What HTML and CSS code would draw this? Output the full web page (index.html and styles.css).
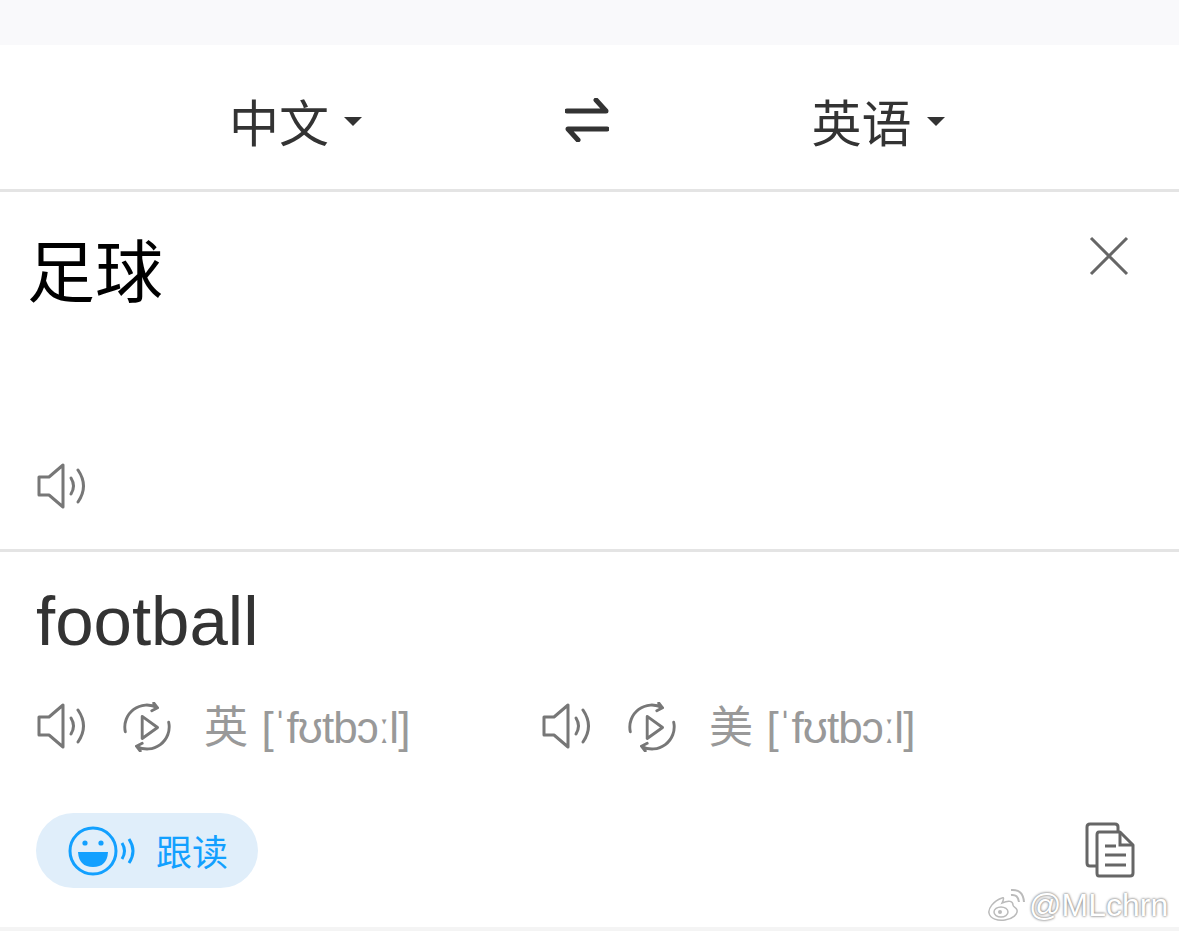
FILE: index.html
```html
<!DOCTYPE html>
<html>
<head>
  <title>翻译</title>
  <link rel="stylesheet" href="styles.css">
</head>

<body>

<div class="status-strip"></div>

<div class="lang-bar">
  <div class="lang lang-from">中文<span class="caret"></span></div>
  <svg class="swap" width="44" height="44" viewBox="0 0 44 44">
    <path d="M2 13H41L31 2" fill="none" stroke="#333" stroke-width="5" stroke-linejoin="round" stroke-linecap="round"/>
    <path d="M42 31H3L13 42" fill="none" stroke="#333" stroke-width="5" stroke-linejoin="round" stroke-linecap="round"/>
  </svg>
  <div class="lang lang-to">英语<span class="caret"></span></div>
</div>

<div class="source">
  <div class="source-top">
    <div class="source-text">足球</div>
    <svg class="close" width="40" height="40" viewBox="0 0 40 40">
      <path d="M2 2L38 38M38 2L2 38" stroke="#666" stroke-width="3" fill="none"/>
    </svg>
  </div>
  <svg class="speaker" width="50" height="46" viewBox="0 0 50 46">
    <path d="M2 14H12L26 2V44L12 32H2Z" fill="none" stroke="#777" stroke-width="3" stroke-linejoin="round"/>
    <path d="M34 15Q39 23 34 31" fill="none" stroke="#777" stroke-width="3" stroke-linecap="round"/>
    <path d="M41 7Q52 23 41 39" fill="none" stroke="#777" stroke-width="3" stroke-linecap="round"/>
  </svg>
</div>

<div class="result">
  <div class="result-text">football</div>

  <div class="phonetics">
    <div class="phonetic">
      <svg class="speaker" width="50" height="46" viewBox="0 0 50 46">
        <path d="M2 14H12L26 2V44L12 32H2Z" fill="none" stroke="#777" stroke-width="3" stroke-linejoin="round"/>
        <path d="M34 15Q39 23 34 31" fill="none" stroke="#777" stroke-width="3" stroke-linecap="round"/>
        <path d="M41 7Q52 23 41 39" fill="none" stroke="#777" stroke-width="3" stroke-linecap="round"/>
      </svg>
      <svg class="replay" width="48" height="50" viewBox="0 0 50 52">
        <path d="M2.4 31A23 23 0 0 1 36 6M32 1L36 6L30 9" fill="none" stroke="#777" stroke-width="3" stroke-linecap="round" stroke-linejoin="round"/>
        <path d="M47.6 21A23 23 0 0 1 14 46M18 51L14 46L20 43" fill="none" stroke="#777" stroke-width="3" stroke-linecap="round" stroke-linejoin="round"/>
        <path d="M20 15L36 26.500L20 38Z" fill="none" stroke="#777" stroke-width="3" stroke-linejoin="round"/>
      </svg>
      <span class="ipa">英 [ˈfʊtbɔːl]</span>
    </div>
    <div class="phonetic">
      <svg class="speaker" width="50" height="46" viewBox="0 0 50 46">
        <path d="M2 14H12L26 2V44L12 32H2Z" fill="none" stroke="#777" stroke-width="3" stroke-linejoin="round"/>
        <path d="M34 15Q39 23 34 31" fill="none" stroke="#777" stroke-width="3" stroke-linecap="round"/>
        <path d="M41 7Q52 23 41 39" fill="none" stroke="#777" stroke-width="3" stroke-linecap="round"/>
      </svg>
      <svg class="replay" width="48" height="50" viewBox="0 0 50 52">
        <path d="M2.4 31A23 23 0 0 1 36 6M32 1L36 6L30 9" fill="none" stroke="#777" stroke-width="3" stroke-linecap="round" stroke-linejoin="round"/>
        <path d="M47.6 21A23 23 0 0 1 14 46M18 51L14 46L20 43" fill="none" stroke="#777" stroke-width="3" stroke-linecap="round" stroke-linejoin="round"/>
        <path d="M20 15L36 26.500L20 38Z" fill="none" stroke="#777" stroke-width="3" stroke-linejoin="round"/>
      </svg>
      <span class="ipa">美 [ˈfʊtbɔːl]</span>
    </div>
  </div>

  <div class="actions">
    <div class="follow">
      <svg width="68" height="50" viewBox="0 0 68 50">
        <circle cx="25" cy="25" r="23" fill="none" stroke="#12a0ff" stroke-width="3"/>
        <circle cx="17" cy="17" r="2.600" fill="#12a0ff"/>
        <circle cx="33" cy="17" r="2.600" fill="#12a0ff"/>
        <path d="M10 26H40Q39 41 25 41Q11 41 10 26Z" fill="#12a0ff"/>
        <path d="M54 17Q59 25 54 33" fill="none" stroke="#12a0ff" stroke-width="3"/>
        <path d="M61 13Q69 25 61 37" fill="none" stroke="#12a0ff" stroke-width="3"/>
      </svg>
      <span class="follow-label">跟读</span>
    </div>
    <svg class="copy" width="50" height="56" viewBox="0 0 50 56">
      <path d="M11 44H5Q2 44 2 41V5Q2 2 5 2H30Q33 2 33 5V10" fill="none" stroke="#666" stroke-width="3"/>
      <path d="M14 10H35L48 23V51Q48 54 45 54H14Q12 54 12 51V13Q12 10 14 10Z" fill="none" stroke="#666" stroke-width="3" stroke-linejoin="round"/>
      <path d="M35 10V23H48M20 24H31M20 33H41M20 43H41" fill="none" stroke="#666" stroke-width="3"/>
    </svg>
  </div>
</div>

<div class="bottom-strip"></div>

<div class="watermark">
  <svg width="38" height="34" viewBox="0 0 38 34">
    <path d="M15 10C6 13 1 21 2 25C3 31 11 33 18 32C26 31 31 26 30 22C29 19 26 19 26 17C26 13 22 12 15 15C17 11 17 9 15 10Z" fill="#fff" stroke="#bbb" stroke-width="1.500"/>
    <ellipse cx="14" cy="24" rx="7" ry="5" fill="#fff" stroke="#bbb" stroke-width="1.500"/>
    <circle cx="13" cy="24" r="2" fill="#bbb"/>
    <path d="M24 7Q31 6 32 14M24 2Q36 1 37 14" fill="none" stroke="#bbb" stroke-width="2"/>
  </svg>
  <span>@MLchrn</span>
</div>

</body>
</html>
```

FILE: styles.css
```css
*{
  box-sizing: border-box;
}

body{
  margin: 0;
  height: 931px;
  overflow: hidden;
  position: relative;
  background-color: white;
  font-family: "Liberation Sans", "Noto Sans CJK SC", sans-serif;
}

.status-strip{
  height: 45px;
  background-color: #f9f9fb;
}

.lang-bar{
  height: 147px;
  border-bottom: 3px solid #e4e4e4;
  display: grid;
  grid-template-columns: 1fr 44px 1fr;
  align-items: center;
}

.lang{
  font-size: 50px;
  line-height: 60px;
  color: #333;
  display: flex;
  align-items: center;
  margin-top: 16px;
}

.lang-from{
  margin-left: 229px;
}

.lang-to{
  margin-left: 200px;
}

.swap{
  margin-left: -3px;
  margin-top: 5px;
}

.caret{
  width: 0;
  height: 0;
  margin-left: 15px;
  margin-top: -8px;
  border-left: 9px solid transparent;
  border-right: 9px solid transparent;
  border-top: 9px solid #333;
}

.source{
  height: 360px;
  border-bottom: 3px solid #e4e4e4;
  padding: 37px 50px 40px 27px;
  display: flex;
  flex-direction: column;
  justify-content: space-between;
}

.source-top{
  display: flex;
  justify-content: space-between;
  align-items: flex-start;
}

.source-text{
  font-size: 68px;
  line-height: 88px;
  color: black;
}

.close{
  margin-top: 7px;
}

.source .speaker{
  margin-left: 10px;
}

.result{
  height: 375px;
  padding: 0 44px 0 36px;
}

.result-text{
  font-size: 69px;
  line-height: 78px;
  color: #333;
  padding-top: 31px;
}

.phonetics{
  display: flex;
  margin-top: 40px;
}

.phonetic{
  width: 505px;
  display: flex;
  align-items: flex-start;
}

.phonetic .speaker{
  margin-left: 1px;
  margin-top: 2px;
}

.replay{
  margin-left: 36px;
  margin-top: 1px;
}

.ipa{
  font-size: 44px;
  line-height: 52px;
  letter-spacing: -0.9px;
  word-spacing: 3px;
  color: #999;
  margin-left: 33px;
  margin-top: 1px;
}

.actions{
  display: flex;
  justify-content: space-between;
  align-items: center;
  margin-top: 59px;
}

.follow{
  width: 222px;
  height: 75px;
  border-radius: 38px;
  background-color: #e0eefa;
  display: flex;
  align-items: center;
  padding-left: 32px;
}

.follow-label{
  font-size: 36px;
  color: #12a0ff;
  margin-left: 20px;
  margin-bottom: 2px;
}

.copy{
  margin-top: -2px;
}

.bottom-strip{
  height: 4px;
  background-color: #f4f4f4;
}

.watermark{
  position: absolute;
  left: 987px;
  top: 886px;
  display: flex;
  align-items: center;
  gap: 4px;
  font-size: 32px;
  line-height: 38px;
  color: white;
  text-shadow: 0 0 3px #888, 0 0 2px #888;
}
```
